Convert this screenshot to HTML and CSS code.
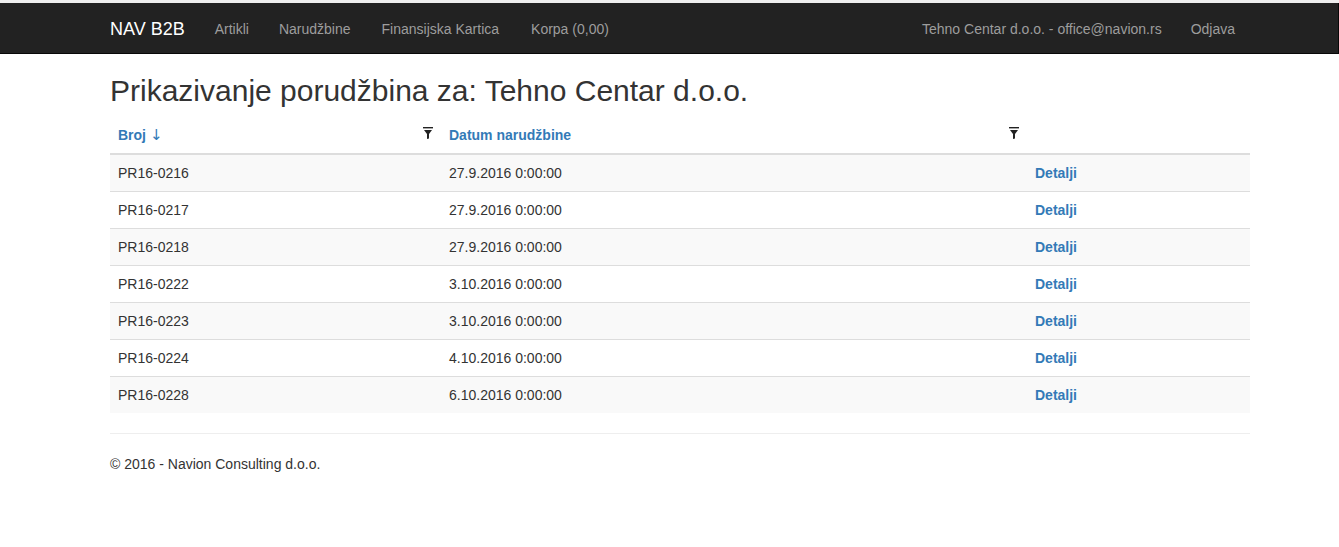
FILE: index.html
```html
<!DOCTYPE html>
<html lang="sr">
<head>
<meta charset="utf-8">
<title>Porudžbine</title>
<link rel="stylesheet" href="styles.css">
</head>
<body>
<div class="topstrip"></div>
<nav class="navbar">
  <div class="container navbar-inner">
    <a class="brand" href="#">NAV B2B</a>
    <ul class="nav">
      <li><a href="#">Artikli</a></li>
      <li><a href="#">Narudžbine</a></li>
      <li><a href="#">Finansijska Kartica</a></li>
      <li><a href="#">Korpa (0,00)</a></li>
    </ul>
    <ul class="nav nav-right">
      <li><a href="#">Tehno Centar d.o.o. - office@navion.rs</a></li>
      <li><a href="#">Odjava</a></li>
    </ul>
  </div>
</nav>
<div class="container main">
  <h2 class="title">Prikazivanje porudžbina za: Tehno Centar d.o.o.</h2>
  <table class="table">
    <colgroup>
      <col class="c1"><col class="c2"><col class="c3">
    </colgroup>
    <thead>
      <tr>
        <th><a href="#">Broj <span class="arrow">↓</span></a><span class="filter"><svg width="10" height="12" viewBox="0 0 10 12"><rect x="0" y="0" width="10" height="1.4" fill="#222"/><path d="M1 3 H9 L6 7 V11.5 L4 12 V7 Z" fill="#222"/></svg></span></th>
        <th><a href="#">Datum narudžbine</a><span class="filter"><svg width="10" height="12" viewBox="0 0 10 12"><rect x="0" y="0" width="10" height="1.4" fill="#222"/><path d="M1 3 H9 L6 7 V11.5 L4 12 V7 Z" fill="#222"/></svg></span></th>
        <th></th>
      </tr>
    </thead>
    <tbody>
      <tr><td>PR16-0216</td><td>27.9.2016 0:00:00</td><td><a class="det" href="#">Detalji</a></td></tr>
      <tr><td>PR16-0217</td><td>27.9.2016 0:00:00</td><td><a class="det" href="#">Detalji</a></td></tr>
      <tr><td>PR16-0218</td><td>27.9.2016 0:00:00</td><td><a class="det" href="#">Detalji</a></td></tr>
      <tr><td>PR16-0222</td><td>3.10.2016 0:00:00</td><td><a class="det" href="#">Detalji</a></td></tr>
      <tr><td>PR16-0223</td><td>3.10.2016 0:00:00</td><td><a class="det" href="#">Detalji</a></td></tr>
      <tr><td>PR16-0224</td><td>4.10.2016 0:00:00</td><td><a class="det" href="#">Detalji</a></td></tr>
      <tr><td>PR16-0228</td><td>6.10.2016 0:00:00</td><td><a class="det" href="#">Detalji</a></td></tr>
    </tbody>
  </table>
  <hr class="sep">
  <footer class="footer"><p>© 2016 - Navion Consulting d.o.o.</p></footer>
</div>
</body>
</html>
```

FILE: styles.css
```css
* { box-sizing: border-box; }
html, body { margin: 0; padding: 0; }
body {
  font-family: "Liberation Sans", Arial, Helvetica, sans-serif;
  font-size: 14px;
  line-height: 20px;
  color: #333;
  background: #fff;
}
a { text-decoration: none; color: #337ab7; }

.topstrip { height: 3px; background: #efefef; }

.navbar {
  background: #222;
  border-bottom: 1px solid #080808;
  border-right: 1px solid #080808;
  height: 51px;
}
.container {
  width: 1140px;
  margin-left: 110px;
}
.navbar-inner {
  display: flex;
  align-items: stretch;
  height: 50px;
}
.brand {
  color: #fff;
  font-size: 18px;
  line-height: 20px;
  padding: 16px 15px 14px 0;
  height: 50px;
}
.nav {
  list-style: none;
  margin: 0;
  padding: 0;
  display: flex;
}
.nav a {
  display: block;
  color: #9d9d9d;
  padding: 16px 15px 14px;
  line-height: 20px;
}
.nav li:nth-child(3) a { padding-left: 16px; }
.nav li:nth-child(4) a { padding-left: 17px; }
.nav-right { margin-left: auto; }
.nav-right li:first-child a { padding-right: 14px; }
.nav-right li:last-child a { padding-left: 15px; padding-right: 15px; }

.title {
  font-size: 30px;
  font-weight: 500;
  line-height: 33px;
  margin: 20px 0 10px;
}

.table {
  width: 1140px;
  border-collapse: collapse;
  border-spacing: 0;
  margin-bottom: 20px;
}
.c1 { width: 331px; }
.c2 { width: 586px; }
.c3 { width: 223px; }
.table th {
  text-align: left;
  font-weight: bold;
  padding: 8px;
  line-height: 20px;
  vertical-align: bottom;
  border-bottom: 2px solid #ddd;
}
.table td {
  padding: 8px;
  line-height: 20px;
  border-top: 1px solid #ddd;
}
.table tbody tr:nth-child(odd) td { background: #f9f9f9; }
.arrow {
  font-weight: normal;
  font-family: "DejaVu Sans", sans-serif;
  font-size: 15px;
  line-height: 14px;
}
.filter {
  float: right;
  height: 20px;
  display: flex;
  align-items: flex-start;
  padding-top: 2px;
}
.filter svg { display: block; }
.det { font-weight: bold; }

.sep {
  margin: 20px 0;
  border: 0;
  border-top: 1px solid #eee;
}
.footer p { margin: 0 0 10px; }
```
